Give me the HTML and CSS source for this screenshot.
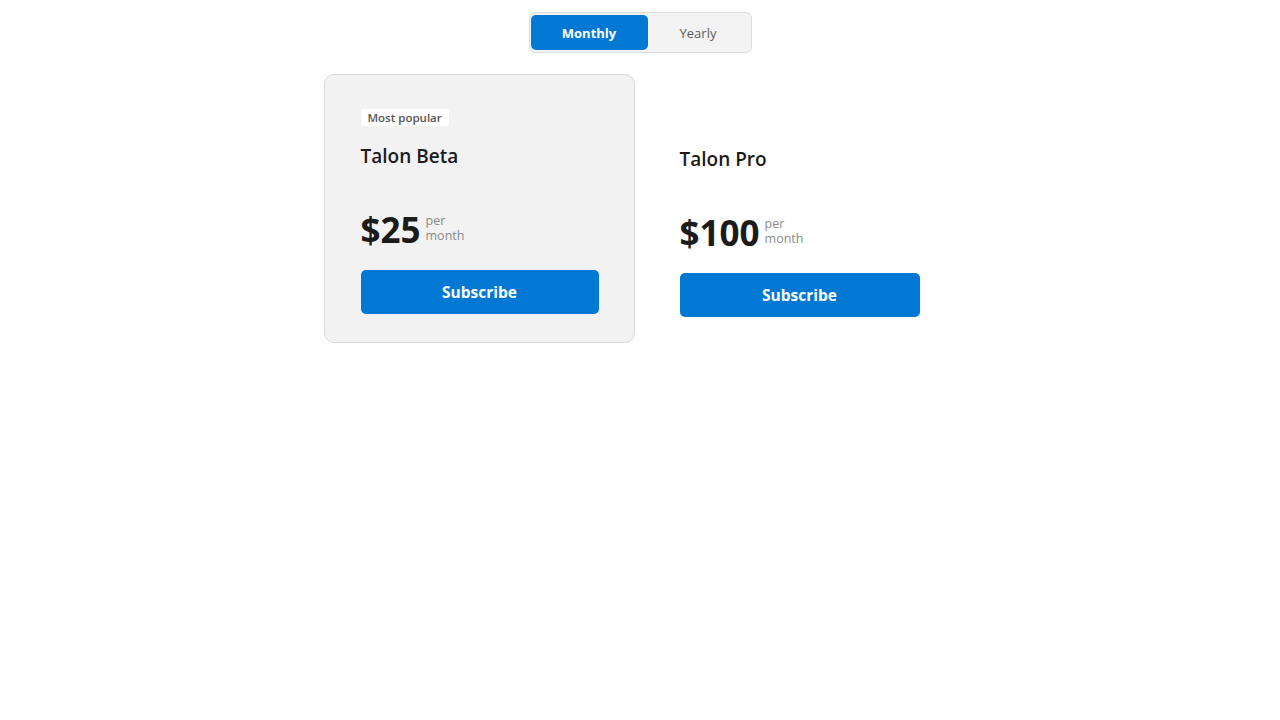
FILE: index.html
```html
<!DOCTYPE html>
<html lang="en">
<head>
<meta charset="utf-8">
<title>Pricing</title>
<link rel="stylesheet" href="styles.css">
</head>
<body>
<div class="page">
  <div class="toggle">
    <button class="toggle-btn active">Monthly</button>
    <button class="toggle-btn">Yearly</button>
  </div>
  <div class="plans">
    <div class="plan featured">
      <span class="badge">Most popular</span>
      <h2 class="plan-name">Talon Beta</h2>
      <div class="price"><span class="amount">$25</span><span class="period">per<br>month</span></div>
      <button class="subscribe">Subscribe</button>
    </div>
    <div class="plan plain">
      <span class="badge hidden">Most popular</span>
      <h2 class="plan-name">Talon Pro</h2>
      <div class="price"><span class="amount">$100</span><span class="period">per<br>month</span></div>
      <button class="subscribe">Subscribe</button>
    </div>
  </div>
</div>
</body>
</html>
```
FILE: styles.css
```css
* { box-sizing: border-box; }
html, body { margin: 0; padding: 0; background: #ffffff; }
body {
  font-family: "Open Sans", "Noto Sans", "Liberation Sans", sans-serif;
  color: #1b1b1b;
}
.page {
  display: flex;
  flex-direction: column;
  align-items: center;
  padding-top: 12px;
}
.toggle {
  display: flex;
  width: 223px;
  height: 41px;
  padding: 2px 2px 2px 1px;
  background: #f3f3f3;
  border: 1px solid #dcdcdc;
  border-radius: 6px;
}
.toggle-btn {
  flex: 0 0 117px;
  border: none;
  background: transparent;
  border-radius: 5px;
  font-family: inherit;
  font-size: 13px;
  color: #5c5c5c;
  cursor: pointer;
}
.toggle-btn + .toggle-btn { flex: 1; }
.toggle-btn.active {
  background: #0078d4;
  color: #ffffff;
  font-weight: 700;
}
.plans {
  display: flex;
  align-items: flex-start;
  gap: 8px;
  margin-top: 21px;
}
.plan {
  display: flex;
  flex-direction: column;
  align-items: flex-start;
  border-radius: 10px;
}
.plan.featured {
  width: 311px;
  padding: 34px 35px 28px 36px;
  background: #f2f2f2;
  border: 1px solid #dadada;
}
.plan.plain {
  width: 314px;
  padding: 37px 36px 28px 36px;
  border: 1px solid transparent;
}
.badge {
  display: inline-block;
  height: 17px;
  line-height: 17px;
  padding: 0 7px;
  background: #ffffff;
  border-radius: 3px;
  font-size: 11.5px;
  font-weight: 600;
  color: #555555;
}
.badge.hidden { visibility: hidden; }
.plan-name {
  margin: 17px 0 0 0;
  font-size: 19px;
  font-weight: 600;
  line-height: 26px;
  color: #1b1b1b;
}
.price {
  display: flex;
  align-items: center;
  gap: 5px;
  margin-top: 41px;
}
.amount {
  font-size: 35px;
  font-weight: 700;
  line-height: 40px;
  color: #1b1b1b;
}
.period {
  font-size: 12.5px;
  line-height: 15px;
  color: #8a8a8a;
  margin-top: -4px;
}
.subscribe {
  width: 100%;
  height: 44px;
  margin-top: 20px;
  border: none;
  border-radius: 5px;
  background: #0078d4;
  color: #ffffff;
  font-family: inherit;
  font-size: 15.5px;
  font-weight: 700;
  cursor: pointer;
}
```
